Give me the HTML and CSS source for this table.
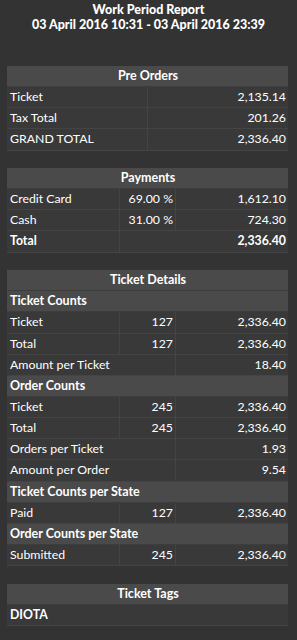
FILE: index.html
```html
<!DOCTYPE html>
<html>
<head>
<meta charset="utf-8">
<link rel="stylesheet" href="styles.css">
</head>
<body>
<div class="page">
  <div class="title">
    <div>Work Period Report</div>
    <div>03 April 2016 10:31 - 03 April 2016 23:39</div>
  </div>

  <table class="rep two">
    <colgroup><col class="c1w"><col></colgroup>
    <tr class="head"><th colspan="2">Pre Orders</th></tr>
    <tr><td>Ticket</td><td class="num">2,135.14</td></tr>
    <tr><td>Tax Total</td><td class="num">201.26</td></tr>
    <tr><td>GRAND TOTAL</td><td class="num">2,336.40</td></tr>
  </table>

  <table class="rep three">
    <colgroup><col class="ca"><col class="cb"><col></colgroup>
    <tr class="head"><th colspan="3">Payments</th></tr>
    <tr><td>Credit Card</td><td class="num">69.00 %</td><td class="num">1,612.10</td></tr>
    <tr><td>Cash</td><td class="num">31.00 %</td><td class="num">724.30</td></tr>
    <tr class="bold"><td>Total</td><td class="num" colspan="2">2,336.40</td></tr>
  </table>

  <table class="rep three">
    <colgroup><col class="ca"><col class="cb"><col></colgroup>
    <tr class="head"><th colspan="3">Ticket Details</th></tr>
    <tr class="sub"><th colspan="3">Ticket Counts</th></tr>
    <tr><td>Ticket</td><td class="num">127</td><td class="num">2,336.40</td></tr>
    <tr><td>Total</td><td class="num">127</td><td class="num">2,336.40</td></tr>
    <tr><td colspan="2">Amount per Ticket</td><td class="num">18.40</td></tr>
    <tr class="sub"><th colspan="3">Order Counts</th></tr>
    <tr><td>Ticket</td><td class="num">245</td><td class="num">2,336.40</td></tr>
    <tr><td>Total</td><td class="num">245</td><td class="num">2,336.40</td></tr>
    <tr><td colspan="2">Orders per Ticket</td><td class="num">1.93</td></tr>
    <tr><td colspan="2">Amount per Order</td><td class="num">9.54</td></tr>
    <tr class="sub"><th colspan="3">Ticket Counts per State</th></tr>
    <tr><td>Paid</td><td class="num">127</td><td class="num">2,336.40</td></tr>
    <tr class="sub"><th colspan="3">Order Counts per State</th></tr>
    <tr><td>Submitted</td><td class="num">245</td><td class="num">2,336.40</td></tr>
  </table>

  <table class="rep">
    <tr class="head"><th>Ticket Tags</th></tr>
    <tr class="bold"><td>DIOTA</td></tr>
  </table>
</div>
</body>
</html>
```
FILE: styles.css
```css
html, body {
  margin: 0;
  padding: 0;
  background: #333333;
}
.page {
  width: 297px;
  height: 640px;
  overflow: hidden;
  font-family: Lato, "Open Sans", sans-serif;
  color: #ffffff;
  font-size: 12.3px;
}
.title {
  text-align: center;
  font-weight: 900;
  font-size: 12.5px;
  line-height: 15px;
  padding-top: 2px;
  height: 64px;
}
.rep {
  width: 281px;
  margin: 0 0 17.4px 7px;
  border-collapse: separate;
  border-spacing: 0;
  table-layout: fixed;
  background: #393939;
}
.rep td, .rep th {
  padding: 0 2px 0 3px;
  border-bottom: 1px solid #444444;
  line-height: 20.15px;
  white-space: nowrap;
  overflow: hidden;
}
.rep td + td {
  border-left: 1px solid #444444;
}
.head th {
  background: #4a4a4a;
  font-weight: bold;
  font-size: 12.5px;
  text-align: center;
  border-bottom: 1px solid #3d3d3d;
}
.sub th {
  background: #4a4a4a;
  font-weight: bold;
  font-size: 12.5px;
  text-align: left;
  border-bottom: 1px solid #3d3d3d;
}
.bold td {
  font-weight: bold;
}
.num {
  text-align: right;
}
.c1w { width: 140px; }
.ca { width: 112px; }
.cb { width: 56px; }
```
